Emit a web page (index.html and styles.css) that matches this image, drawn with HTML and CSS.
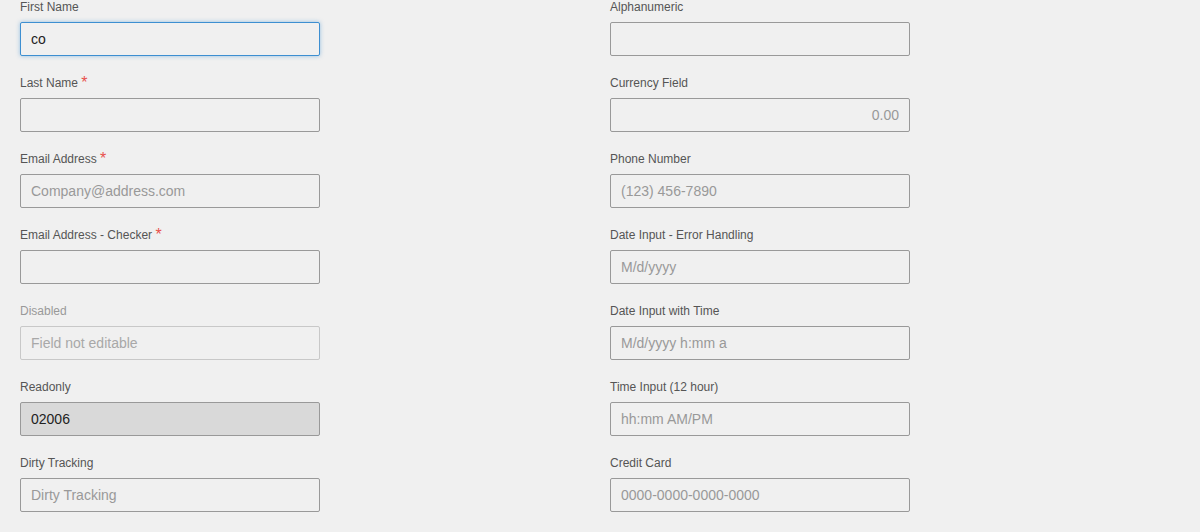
FILE: index.html
```html
<!DOCTYPE html>
<html>
<head>
<meta charset="utf-8">
<link rel="stylesheet" href="styles.css">
</head>
<body>
<form class="form">
  <div class="col">
    <div class="field"><label class="lbl">First Name</label><input class="inp focused" value="co"></div>
    <div class="field"><label class="lbl">Last Name <span class="req">*</span></label><input class="inp"></div>
    <div class="field"><label class="lbl">Email Address <span class="req">*</span></label><input class="inp" placeholder="Company@address.com"></div>
    <div class="field"><label class="lbl">Email Address - Checker <span class="req">*</span></label><input class="inp"></div>
    <div class="field"><label class="lbl disabled">Disabled</label><input class="inp" placeholder="Field not editable" disabled></div>
    <div class="field"><label class="lbl">Readonly</label><input class="inp readonly" value="02006" readonly></div>
    <div class="field"><label class="lbl">Dirty Tracking</label><input class="inp" placeholder="Dirty Tracking"></div>
  </div>
  <div class="col">
    <div class="field"><label class="lbl">Alphanumeric</label><input class="inp"></div>
    <div class="field"><label class="lbl">Currency Field</label><input class="inp right" placeholder="0.00"></div>
    <div class="field"><label class="lbl">Phone Number</label><input class="inp" placeholder="(123) 456-7890"></div>
    <div class="field"><label class="lbl">Date Input - Error Handling</label><input class="inp" placeholder="M/d/yyyy"></div>
    <div class="field"><label class="lbl">Date Input with Time</label><input class="inp" placeholder="M/d/yyyy h:mm a"></div>
    <div class="field"><label class="lbl">Time Input (12 hour)</label><input class="inp" placeholder="hh:mm AM/PM"></div>
    <div class="field"><label class="lbl">Credit Card</label><input class="inp" placeholder="0000-0000-0000-0000"></div>
  </div>
</form>
</body>
</html>
```

FILE: styles.css
```css
html, body {
  margin: 0;
  padding: 0;
  background: #f0f0f0;
  font-family: "Liberation Sans", Arial, sans-serif;
  overflow: hidden;
}
.form {
  display: grid;
  grid-template-columns: 590px 590px;
  padding: 0 0 0 20px;
}
.col {
  display: flex;
  flex-direction: column;
}
.field {
  display: flex;
  flex-direction: column;
  margin-bottom: 20px;
}
.lbl {
  font-size: 12px;
  line-height: 14px;
  color: #555;
  margin-bottom: 8px;
  height: 14px;
}
.lbl.disabled {
  color: #999;
}
.req {
  color: #e8504c;
  font-size: 16px;
  line-height: 14px;
  vertical-align: -1px;
}
.inp {
  box-sizing: border-box;
  width: 300px;
  height: 34px;
  margin: 0;
  padding: 0 10px;
  border: 1px solid #999;
  border-radius: 2px;
  background: #f0f0f0;
  font-family: "Liberation Sans", Arial, sans-serif;
  font-size: 14px;
  color: #222;
  outline: none;
}
.inp::placeholder {
  color: #999;
  opacity: 1;
}
.inp.focused {
  border-color: #3d8fd1;
  box-shadow: 0 0 4px rgba(61, 143, 209, 0.5);
}
.inp:disabled {
  border-color: #c8c8c8;
  background: #f0f0f0;
}
.inp:disabled::placeholder {
  color: #a8a8a8;
}
.inp.readonly {
  background: #d9d9d9;
}
.inp.right {
  text-align: right;
}
```
